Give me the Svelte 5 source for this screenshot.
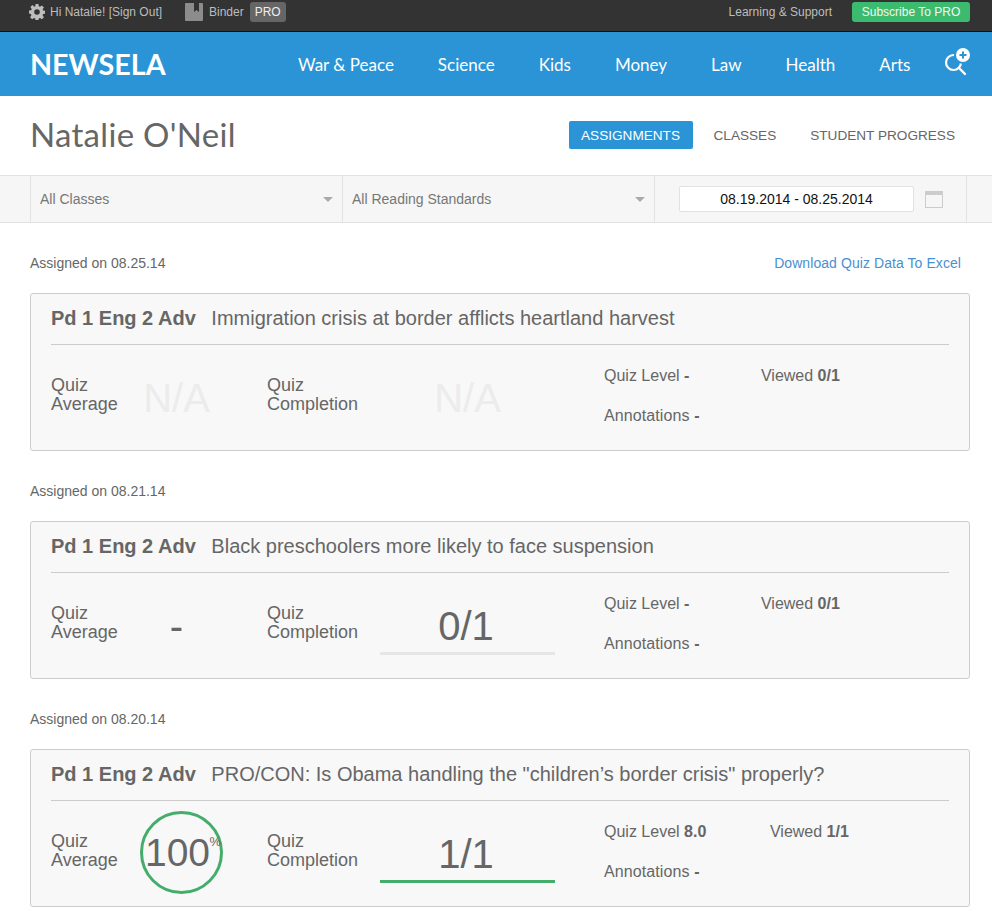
<script>
  const nav = ['War & Peace', 'Science', 'Kids', 'Money', 'Law', 'Health', 'Arts'];
  const cards = [
    { date: '08.25.14', title: 'Immigration crisis at border afflicts heartland harvest', avg: 'na', comp: 'na', level: '-', viewed: '0/1' },
    { date: '08.21.14', title: 'Black preschoolers more likely to face suspension', avg: 'dash', comp: '0/1', level: '-', viewed: '0/1' },
    { date: '08.20.14', title: 'PRO/CON: Is Obama handling the "children’s border crisis" properly?', avg: 'full', comp: '1/1', level: '8.0', viewed: '1/1' }
  ];
</script>

<div class="page">
  <div class="topbar">
    <div class="user">
      <svg class="gear" width="16" height="16" viewBox="0 0 16 16"><path fill="#bdbdbd" fill-rule="evenodd" d="M6.600 0h2.800l.4 2.200 1.200.5L12.900 1.400l2 2-1.300 1.900.5 1.200 2.200.4v2.800l-2.200.4-.5 1.200 1.300 1.900-2 2-1.900-1.300-1.200.5-.4 2.200H6.600l-.4-2.200-1.200-.5-1.900 1.300-2-2 1.300-1.900-.5-1.200L0 9.400V6.600l2.200-.4.500-1.200L1.400 3.100l2-2L5.300 2.700l1-.5zM8 5.200a2.800 2.800 0 1 0 0 5.600 2.800 2.800 0 0 0 0-5.600z"/></svg>
      <span>Hi Natalie! [Sign Out]</span>
    </div>
    <div class="binder">
      <svg width="18" height="18" viewBox="0 0 18 18"><path fill="#8c8c8c" d="M1 0H9V9L11.500 7 14 9V0H17a1 1 0 0 1 1 1V17a1 1 0 0 1-1 1H1a1 1 0 0 1-1-1V1a1 1 0 0 1 1-1z"/></svg>
      <span>Binder</span>
      <span class="pro">PRO</span>
    </div>
    <div class="top-right">
      <span>Learning &amp; Support</span>
      <span class="subscribe">Subscribe To PRO</span>
    </div>
  </div>

  <div class="bluebar">
    <div class="logo">NEWSELA</div>
    <nav class="nav">
      {#each nav as item}<span>{item}</span>{/each}
    </nav>
    <svg class="search" width="32" height="32" viewBox="0 0 32 32">
      <circle cx="11.500" cy="16.500" r="7.500" fill="none" stroke="#fff" stroke-width="2.200"/>
      <path d="M17 22l6 6" stroke="#fff" stroke-width="2.400" stroke-linecap="round"/>
      <circle cx="21" cy="9" r="9" fill="#2a94d6"/>
      <circle cx="21" cy="9" r="7" fill="#fff"/>
      <path d="M21 5.500v7M17.500 9h7" stroke="#2a94d6" stroke-width="2"/>
    </svg>
  </div>

  <header class="head">
    <h1>Natalie O'Neil</h1>
    <div class="tabs">
      <span class="tab active">ASSIGNMENTS</span>
      <span class="tab">CLASSES</span>
      <span class="tab">STUDENT PROGRESS</span>
    </div>
  </header>

  <div class="filters">
    <div class="cell"><span>All Classes</span><i class="caret"></i></div>
    <div class="cell"><span>All Reading Standards</span><i class="caret"></i></div>
    <div class="cell datecell">
      <div class="dateinput">08.19.2014 - 08.25.2014</div>
      <div class="cal"></div>
    </div>
  </div>

  <main class="list">
    {#each cards as c, i}
      <div class="assigned">
        <span>Assigned on {c.date}</span>
        {#if i === 0}<a href="#top">Download Quiz Data To Excel</a>{/if}
      </div>
      <section class="card">
        <div class="card-title"><b>Pd 1 Eng 2 Adv</b><span>{c.title}</span></div>
        <div class="stats">
          <div class="label avg-label">Quiz<br />Average</div>
          <div class="avg">
            {#if c.avg === 'na'}<span class="na">N/A</span>
            {:else if c.avg === 'dash'}<span class="big">-</span>
            {:else}<div class="ring"><span class="big">100</span><sup>%</sup></div>{/if}
          </div>
          <div class="label comp-label">Quiz<br />Completion</div>
          <div class="comp">
            {#if c.comp === 'na'}<span class="na">N/A</span>
            {:else}
              <span class="big">{c.comp}</span>
              <div class="bar" class:done={c.comp === '1/1'}></div>
            {/if}
          </div>
          <div class="meta">
            <div class="meta-row">
              <span class="level" class:wide={c.level !== '-'}>Quiz Level <b>{c.level}</b></span>
              <span>Viewed <b>{c.viewed}</b></span>
            </div>
            <div class="annotations">Annotations <b>-</b></div>
          </div>
        </div>
      </section>
    {/each}
  </main>
</div>

<style>
  :global(body) { margin: 0; background: #fff; }
  .page { width: 992px; height: 922px; overflow: hidden; font-family: "Liberation Sans", Arial, sans-serif; color: #666; }

  .topbar { height: 24px; background: #333; border-bottom: 1px solid #111; display: flex; align-items: center; padding: 0 22px 7px 29px; font-size: 12px; color: #bdbdbd; }
  .user { display: flex; align-items: center; gap: 5px; width: 156px; }
  .binder { display: flex; align-items: center; gap: 6px; }
  .pro { background: #666; color: #eee; border-radius: 3px; padding: 0 5px; height: 20px; line-height: 20px; }
  .top-right { margin-left: auto; display: flex; align-items: center; gap: 20px; }
  .subscribe { background: #3cbb6e; color: #f0f8f2; border-radius: 3px; width: 118px; height: 20px; line-height: 20px; text-align: center; }

  .bluebar { height: 64px; background: #2a94d6; display: flex; align-items: center; padding-left: 30px; color: #fff; position: relative; }
  .logo { font-family: Lato, sans-serif; font-weight: 700; font-size: 28.700px; width: 268px; }
  .nav { display: flex; gap: 44px; font-family: Lato, sans-serif; font-size: 17px; }
  .search { position: absolute; left: 942px; top: 14px; }

  .head { height: 79px; display: flex; align-items: center; justify-content: space-between; padding: 0 37px 0 30px; }
  h1 { margin: 0; font-family: Lato, sans-serif; font-weight: 400; font-size: 33px; color: #666; letter-spacing: 0.3px; position: relative; top: -2px; }
  .tabs { display: flex; font-size: 13.600px; color: #666; align-items: center; padding-bottom: 2px; }
  .tab { height: 28px; line-height: 30px; margin-left: 21px; }
  .tab:last-child { margin-left: 34px; }
  .tab.active { background: #2a94d6; color: #fff; border-radius: 2px; margin-left: 0; width: 124px; text-align: center; }

  .filters { height: 46px; background: #f6f6f6; border-top: 1px solid #e2e2e2; border-bottom: 1px solid #e2e2e2; padding-left: 30px; display: flex; font-size: 14px; color: #777; }
  .cell { width: 312px; box-sizing: border-box; border-left: 1px solid #e2e2e2; padding: 0 9px; display: flex; align-items: center; justify-content: space-between; }
  .datecell { border-right: 1px solid #e2e2e2; width: 313px; padding: 0 23px 0 24px; }
  .caret { border-left: 5px solid transparent; border-right: 5px solid transparent; border-top: 5px solid #aaa; }
  .dateinput { width: 235px; height: 26px; box-sizing: border-box; border: 1px solid #e2e2e2; border-radius: 2px; background: #fff; color: #111; text-align: center; line-height: 24px; }
  .cal { width: 18px; height: 17px; box-sizing: border-box; border: 1px solid #ccc; border-top: 4px solid #ccc; background: #f6f6f6; }

  .list { padding: 0 22px 0 30px; }
  .assigned { height: 70px; box-sizing: border-box; padding: 10px 9px 0 0; display: flex; justify-content: space-between; align-items: center; font-size: 14px; color: #666; }
  .assigned a { color: #4a90d0; text-decoration: none; letter-spacing: 0.07px; }
  .card { width: 940px; height: 158px; box-sizing: border-box; background: #f8f8f8; border: 1px solid #ccc; border-radius: 3px; padding: 0 20px; }
  .card-title { height: 48px; padding-bottom: 2px; border-bottom: 1px solid #ccc; display: flex; align-items: center; gap: 15.500px; font-size: 20px; color: #666; }
  .stats { display: flex; font-size: 18px; }
  .label { line-height: 19px; padding-top: 31px; }
  .avg-label { width: 85px; }
  .avg { width: 131px; height: 106px; display: flex; justify-content: center; align-items: center; padding-right: 50px; box-sizing: border-box; }
  .comp-label { width: 113px; }
  .comp { width: 175px; display: flex; flex-direction: column; align-items: center; }
  .na { font-size: 40px; color: #ececec; line-height: 106px; }
  .big { font-size: 40px; color: #666; line-height: 46px; }
  .comp .big { margin: 30px 3px 3px 0; }
  .bar { width: 175px; height: 3px; background: #e6e6e6; }
  .bar.done { background: #45ad6c; }
  .ring { width: 83px; height: 83px; box-sizing: border-box; border: 3px solid #45ad6c; border-radius: 50%; display: flex; align-items: center; justify-content: center; position: relative; flex: none; margin: -3px 0 0 10px; }
  .ring .big { margin-left: -8px; font-size: 39px; }
  .ring sup { font-size: 13px; position: absolute; right: -1px; top: 21px; line-height: 1; }
  .meta { margin-left: 49px; padding-top: 22px; font-size: 16px; color: #666; }
  .meta-row { height: 40px; }
  .level { display: inline-block; min-width: 152.500px; }
  .level.wide { min-width: 161.500px; }
  .annotations { letter-spacing: 0.1px; }
</style>
